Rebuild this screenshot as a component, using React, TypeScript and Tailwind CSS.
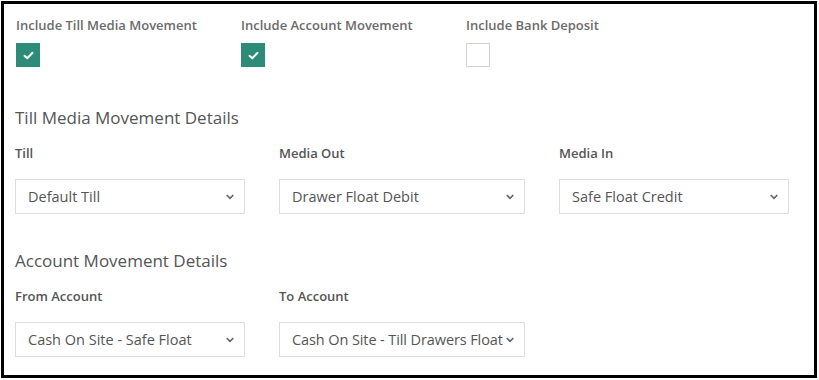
import React from "react";

const font = { fontFamily: '"Open Sans", "Noto Sans", sans-serif' };

const Check = ({ checked }: { checked: boolean }) => {
  if (!checked) {
    return <div className="h-6 w-6 border border-[#d5d0cc] bg-white" />;
  }
  return (
    <div className="flex h-6 w-6 items-center justify-center bg-[#2d8c78]">
      <svg width="11" height="9" viewBox="0 0 11 9" fill="none">
        <path d="M1.5 4.8 L4.3 7.3 L9.5 1.8" stroke="white" strokeWidth="2" strokeLinecap="round" strokeLinejoin="round" />
      </svg>
    </div>
  );
};

const CheckField = ({ label, checked }: { label: string; checked: boolean }) => {
  return (
    <div className="w-[225px]">
      <p className="text-[13px] font-semibold leading-5 text-[#6b6b6b]">{label}</p>
      <div className="mt-[8px]">
        <Check checked={checked} />
      </div>
    </div>
  );
};

const SelectField = ({
  label,
  value,
  width,
  tight,
}: {
  label: string;
  value: string;
  width: string;
  tight?: boolean;
}) => {
  return (
    <div className={width}>
      <p className="text-[13px] font-semibold leading-5 text-[#555]">{label}</p>
      <div className="mt-[16px] flex h-[35px] items-center justify-between border border-[#dedede] bg-white pl-3 pr-[10px]">
        <span className={`whitespace-nowrap text-[14.5px] text-[#555] ${tight ? "tracking-[-0.1px]" : ""}`}>{value}</span>
        <svg width="8" height="6" viewBox="0 0 8 6" fill="none" className="shrink-0">
          <path d="M1.2 1.5 L4 4.3 L6.8 1.5" stroke="#666" strokeWidth="1.7" strokeLinecap="round" strokeLinejoin="round" />
        </svg>
      </div>
    </div>
  );
};

export default function App() {
  return (
    <div className="h-[380px] w-[819px] bg-white pl-[1px] pt-[1px]" style={font}>
      <div className="h-[377px] w-[816px] border-[3px] border-black px-[11px] pt-[11px]">
        <div className="flex pl-[1px]">
          <CheckField label="Include Till Media Movement" checked />
          <CheckField label="Include Account Movement" checked />
          <CheckField label="Include Bank Deposit" checked={false} />
        </div>

        <h2 className="mt-[39px] text-[17px] font-medium leading-6 text-[#555]">
          Till Media Movement Details
        </h2>
        <div className="mt-[13px] flex gap-[34px]">
          <SelectField label="Till" value="Default Till" width="w-[230px]" />
          <SelectField label="Media Out" value="Drawer Float Debit" width="w-[246px]" />
          <SelectField label="Media In" value="Safe Float Credit" width="w-[230px]" />
        </div>

        <h2 className="mt-[35px] text-[17px] font-medium leading-6 text-[#555]">
          Account Movement Details
        </h2>
        <div className="mt-[13px] flex gap-[34px]">
          <SelectField label="From Account" value="Cash On Site - Safe Float" width="w-[230px]" />
          <SelectField label="To Account" value="Cash On Site - Till Drawers Float" width="w-[246px]" tight />
        </div>
      </div>
    </div>
  );
}
